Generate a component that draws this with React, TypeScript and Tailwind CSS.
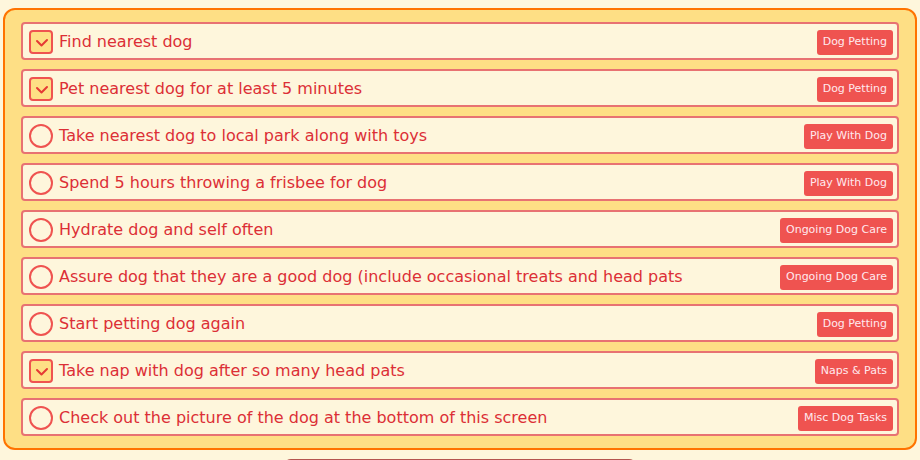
const tasks = [
  { title: "Find nearest dog", tag: "Dog Petting", done: true },
  { title: "Pet nearest dog for at least 5 minutes", tag: "Dog Petting", done: true },
  { title: "Take nearest dog to local park along with toys", tag: "Play With Dog", done: false },
  { title: "Spend 5 hours throwing a frisbee for dog", tag: "Play With Dog", done: false },
  { title: "Hydrate dog and self often", tag: "Ongoing Dog Care", done: false },
  { title: "Assure dog that they are a good dog (include occasional treats and head pats", tag: "Ongoing Dog Care", done: false },
  { title: "Start petting dog again", tag: "Dog Petting", done: false },
  { title: "Take nap with dog after so many head pats", tag: "Naps & Pats", done: true },
  { title: "Check out the picture of the dog at the bottom of this screen", tag: "Misc Dog Tasks", done: false },
];

export default function App() {
  return (
    <div className="h-screen bg-[#fef6dc] px-[3px] pt-2 font-['DejaVu_Sans',sans-serif] overflow-hidden">
      <div className="rounded-xl border-2 border-[#ff7300] bg-[#fedf85] px-4 pt-3 pb-3 flex flex-col gap-[9px]">
        {tasks.map((t) => (
          <TaskRow key={t.title} {...t} />
        ))}
      </div>
      <div className="mx-auto mt-[9px] w-[354px] h-10 rounded-t-lg border-2 border-[#b5554f] bg-[#fedf85]" />
    </div>
  );
}

function TaskRow({ title, tag, done }: { title: string; tag: string; done: boolean }) {
  return (
    <div className="h-[38px] flex items-center rounded border-2 border-[#e87272] bg-[#fef6dc] pl-[6px] pr-[6px] pt-[2px]">
      {done ? (
        <span className="shrink-0 w-[24px] h-[24px] rounded-[4px] border-2 border-[#ef5350] bg-[#fedf85] flex items-center justify-center">
          <svg width="14" height="10" viewBox="0 0 14 10" fill="none" className="ml-[1px] mt-[2px]">
            <path d="M2 3 L6.5 7.5 L12 2" stroke="#e53935" strokeWidth="2" strokeLinecap="round" strokeLinejoin="round" />
          </svg>
        </span>
      ) : (
        <span className="shrink-0 w-[24px] h-[24px] rounded-full border-2 border-[#ef5350]" />
      )}
      <span className="ml-[6px] text-[16px] text-[#dc2f36]">{title}</span>
      <span className="ml-auto mr-[-2px] shrink-0 h-[25px] flex items-center rounded-[3px] bg-[#ef5350] px-[6px] text-[11px] text-[#ffe9ee]">
        {tag}
      </span>
    </div>
  );
}
